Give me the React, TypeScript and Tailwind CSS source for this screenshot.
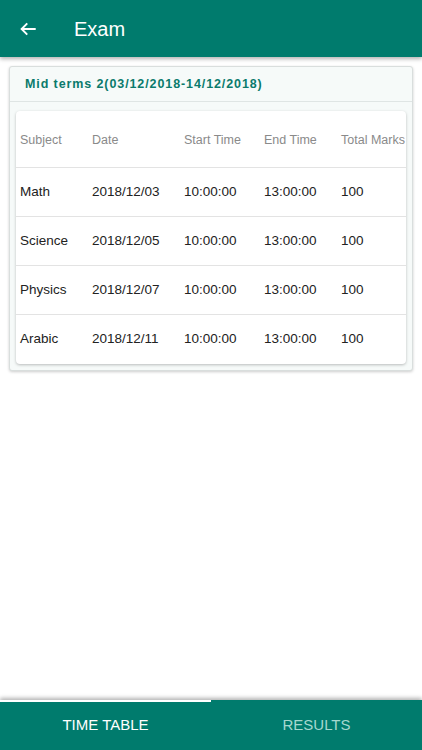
import React from "react";

const rows = [
  ["Math", "2018/12/03", "10:00:00", "13:00:00", "100"],
  ["Science", "2018/12/05", "10:00:00", "13:00:00", "100"],
  ["Physics", "2018/12/07", "10:00:00", "13:00:00", "100"],
  ["Arabic", "2018/12/11", "10:00:00", "13:00:00", "100"],
];

const cols = ["w-[72px]", "w-[92px]", "w-[80px]", "w-[77px]", "flex-1"];

export default function App() {
  return (
    <div
      className="w-[422px] h-[750px] bg-white flex flex-col relative overflow-hidden"
      style={{ fontFamily: '"Liberation Sans", Arial, sans-serif' }}
    >
      <div className="h-[57px] bg-[#007b6d] flex items-center shrink-0 shadow-[0_2px_4px_rgba(0,0,0,0.3)] z-10">
        <svg width="18" height="18" viewBox="0 0 24 24" className="ml-[19px]" fill="none" stroke="white" strokeWidth="2.6" strokeLinecap="square">
          <path d="M21 12H4" />
          <path d="M11 4.5L3.5 12L11 19.5" strokeLinecap="butt" />
        </svg>
        <span className="ml-[37px] text-white text-[20px]">Exam</span>
      </div>

      <div className="flex-1 pt-[9px] px-[9px]">
        <div className="border border-[#d9dedd] rounded-[3px] bg-[#f6faf9] shadow-[0_1px_3px_rgba(0,0,0,0.2)]">
          <div className="h-[35px] flex items-center pl-[15px] border-b border-[#dfe5e4] text-[#0b7a6c] font-bold text-[12.5px] tracking-[0.9px]">
            Mid terms 2(03/12/2018-14/12/2018)
          </div>
          <div className="mx-[6px] mt-[9px] mb-[6px] bg-white rounded-[4px] shadow-[0_1px_3px_rgba(0,0,0,0.25)]">
            <div className="h-[57px] flex items-center pl-[4px] text-[12.5px] text-[#8a8a8a] border-b border-[#e3e3e3]">
              {["Subject", "Date", "Start Time", "End Time", "Total Marks"].map((h, i) => (
                <div key={h} className={cols[i] + " whitespace-nowrap pt-[2px]"}>{h}</div>
              ))}
            </div>
            {rows.map((r, ri) => (
              <div
                key={ri}
                className={
                  "h-[49px] flex items-center pl-[4px] text-[13.5px] text-[#222] " +
                  (ri < rows.length - 1 ? "border-b border-[#e3e3e3]" : "")
                }
              >
                {r.map((c, i) => (
                  <div key={i} className={cols[i] + " whitespace-nowrap"}>{c}</div>
                ))}
              </div>
            ))}
          </div>
        </div>
      </div>

      <div className="h-[50px] bg-[#007b6d] flex shrink-0 relative shadow-[0_-2px_4px_rgba(0,0,0,0.3)]">
        <div className="absolute top-0 left-0 w-[211px] h-[2px] bg-white" />
        <div className="flex-1 flex items-center justify-center text-white text-[15px]">TIME TABLE</div>
        <div className="flex-1 flex items-center justify-center text-[#a6d8cf] text-[15px]">RESULTS</div>
      </div>
    </div>
  );
}
